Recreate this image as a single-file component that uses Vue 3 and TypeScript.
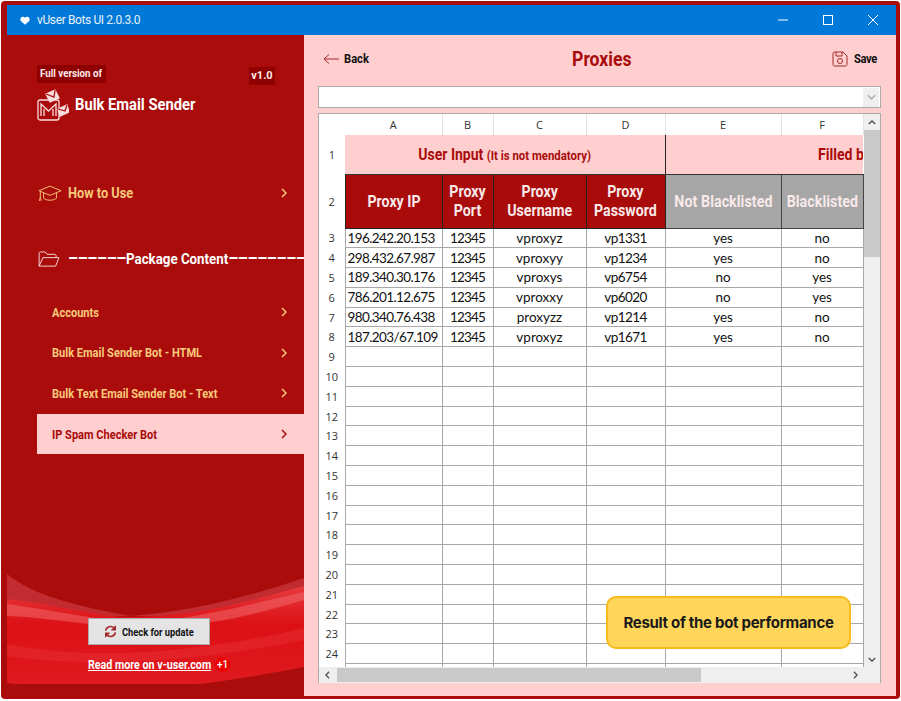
<script setup lang="ts">
interface Row { ip: string; port: string; user: string; pass: string; ok: string; bad: string }
const rows: Row[] = [
  { ip: '196.242.20.153', port: '12345', user: 'vproxyz', pass: 'vp1331', ok: 'yes', bad: 'no' },
  { ip: '298.432.67.987', port: '12345', user: 'vproxyy', pass: 'vp1234', ok: 'yes', bad: 'no' },
  { ip: '189.340.30.176', port: '12345', user: 'vproxys', pass: 'vp6754', ok: 'no', bad: 'yes' },
  { ip: '786.201.12.675', port: '12345', user: 'vproxxy', pass: 'vp6020', ok: 'no', bad: 'yes' },
  { ip: '980.340.76.438', port: '12345', user: 'proxyzz', pass: 'vp1214', ok: 'yes', bad: 'no' },
  { ip: '187.203/67.109', port: '12345', user: 'vproxyz', pass: 'vp1671', ok: 'yes', bad: 'no' },
]
const emptyRows: number[] = Array.from({ length: 16 }, (_, i) => i + 9)
const letters = ['A', 'B', 'C', 'D', 'E', 'F']
const packages = ['Accounts', 'Bulk Email Sender Bot - HTML', 'Bulk Text Email Sender Bot - Text']
</script>

<template>
  <div class="frame">
    <div class="window">
      <header class="titlebar">
        <svg class="app-icon" viewBox="0 0 12 10" width="10" height="9"><path d="M6 10 1 5.500C-.5 3.500 1 .5 3.500.5 4.700.5 5.500 1 6 2 6.500 1 7.300.5 8.500.5 11 .5 12.500 3.500 11 5.500Z" fill="#fff"/></svg>
        <span class="title-text">vUser Bots UI 2.0.3.0</span>
        <div class="win-controls">
          <svg viewBox="0 0 10 10" width="10" height="10"><path d="M0 5h10" stroke="#fff" fill="none"/></svg>
          <svg viewBox="0 0 10 10" width="10" height="10"><rect x=".5" y=".5" width="9" height="9" stroke="#fff" fill="none"/></svg>
          <svg viewBox="0 0 10 10" width="10" height="10"><path d="M0 0l10 10M10 0 0 10" stroke="#fff" fill="none"/></svg>
        </div>
      </header>

      <div class="body">
        <aside class="sidebar">
          <svg class="waves" viewBox="0 0 297 130" preserveAspectRatio="none" width="297" height="130">
            <defs>
              <linearGradient id="bright" x1="0" y1="0" x2="0" y2="1">
                <stop offset="0" stop-color="#e6393d"/>
                <stop offset=".4" stop-color="#dc1015"/>
                <stop offset="1" stop-color="#e01a20"/>
              </linearGradient>
            </defs>
            <path d="M0 8C25 28 60 38 123 50 190 45 250 28 297 12V50H0Z" fill="#c22c30"/>
            <path d="M0 33C50 38 90 51 123 51 200 50 250 32 297 20V118H0Z" fill="url(#bright)"/>
            <path d="M0 38C60 46 110 60 160 54 220 46 260 34 297 26V34C250 48 210 58 150 62 90 62 50 52 0 50Z" fill="#f0686a" opacity=".55"/>
            <path d="M0 78C70 92 170 92 297 62V74C170 100 70 100 0 90Z" fill="#ee4a4e" opacity=".25"/>
            <path d="M0 117C40 122 70 124 100 124 170 124 240 112 297 101V130H0Z" fill="#ab0d0d"/>
          </svg>

          <div class="brand">
            <div class="version-row">
              <span class="chip"><span class="sq-chip">Full version of</span></span>
              <span class="chip chip-version">v1.0</span>
            </div>
            <div class="brand-row">
              <svg class="logo" viewBox="0 0 32 32" width="32" height="32" fill="none" stroke="#f9dcdc" stroke-width="1.300">
                <rect x="1" y="11" width="21" height="20" rx="2"/>
                <path d="M4 27V15l7.500 7L19 15v12M7 27v-7M16 27v-7"/>
                <path d="M9 5l9-4 4 8-9 4Z" fill="#f9dcdc"/>
                <path d="M9 5l8 3 1-7" stroke="#a90b0b"/>
                <path d="M21 20l9-4 2 7-9 4Z" fill="#f9dcdc"/>
                <path d="M21 20l7 2 2-6" stroke="#a90b0b"/>
              </svg>
              <span class="brand-name">Bulk Email Sender</span>
            </div>
          </div>

          <div class="nav-main how">
            <svg class="nav-icon" viewBox="0 0 26 18" width="24" height="17" fill="none" stroke="#f7c97a" stroke-width="1"><path d="M1 6 13 1l12 5-12 5Z"/><path d="M6 8.500V14c3 3 11 3 14 0V8.500"/><path d="M2.500 7v6M1.500 17l1-4 1 4"/></svg>
            <span class="main-label">How to Use</span>
            <svg class="chev" viewBox="0 0 6 10" width="6" height="10" fill="none" stroke="currentColor" stroke-width="1.500"><path d="M1 1l4 4-4 4"/></svg>
          </div>

          <div class="nav-main package">
            <svg class="nav-icon" viewBox="0 0 24 18" width="23" height="17" fill="none" stroke="#f9dcdc" stroke-width="1"><path d="M1 16V2.500C1 1.700 1.700 1 2.500 1h5l2 2.500h8c.8 0 1.500.7 1.500 1.500v2"/><path d="M1 16 5 7h17l-3.500 9Z"/></svg>
            <span class="package-label"><span class="dash">––––––</span>Package Content<span class="dash">––––––––</span></span>
          </div>

          <nav class="sub-nav">
            <div v-for="p in packages" :key="p" class="sub-item">
              <span class="sub-label">{{ p }}</span>
              <svg class="chev" viewBox="0 0 6 10" width="6" height="10" fill="none" stroke="currentColor" stroke-width="1.500"><path d="M1 1l4 4-4 4"/></svg>
            </div>
            <div class="sub-item active">
              <span class="sub-label">IP Spam Checker Bot</span>
              <svg class="chev" viewBox="0 0 6 10" width="6" height="10" fill="none" stroke="currentColor" stroke-width="1.500"><path d="M1 1l4 4-4 4"/></svg>
            </div>
          </nav>

          <div class="foot">
            <button class="update">
              <svg viewBox="0 0 16 16" width="13" height="13" fill="none" stroke="#a5282a" stroke-width="2"><path d="M2 7a6 6 0 0 1 10.500-3L14 5.500"/><path d="M14 1v5H9" stroke-width="1.500" fill="#a5282a"/><path d="M14 9A6 6 0 0 1 3.500 12L2 10.500"/><path d="M2 15v-5h5" stroke-width="1.500" fill="#a5282a"/></svg>
              <span class="update-label">Check for update</span>
            </button>
            <div class="more">
              <a class="more-link">Read more on v-user.com</a>
              <span class="badge">+1</span>
            </div>
          </div>
        </aside>

        <main class="content">
          <div class="topbar">
            <div class="top-action">
              <svg viewBox="0 0 16 10" width="16" height="10" fill="none" stroke="#a5282a" stroke-width="1"><path d="M16 5H1M6 .5 1 5l5 4.500"/></svg>
              <span class="action-label">Back</span>
            </div>
            <h1 class="page-title">Proxies</h1>
            <div class="top-action save">
              <svg viewBox="0 0 16 16" width="16" height="16" fill="none" stroke="#a5282a" stroke-width="1"><path d="M1 2.500C1 1.700 1.700 1 2.500 1H11l4 4v8.500c0 .8-.7 1.500-1.500 1.500h-11C1.700 15 1 14.300 1 13.500Z"/><path d="M4 1v4h6V1"/><circle cx="8" cy="10" r="2.500"/></svg>
              <span class="action-label">Save</span>
            </div>
          </div>

          <div class="combo">
            <span class="combo-btn">
              <svg viewBox="0 0 10 6" width="9" height="6" fill="none" stroke="#a8a8a8" stroke-width="1.500"><path d="M1 1l4 4 4-4"/></svg>
            </span>
          </div>

          <div class="sheet">
            <div class="sheet-top">
              <div class="grid-clip">
                <table class="grid">
                  <colgroup>
                    <col class="c0"/><col class="c1"/><col class="c2"/><col class="c3"/><col class="c4"/><col class="c5"/><col class="c6"/>
                  </colgroup>
                  <tbody>
                    <tr class="r-letters">
                      <th class="rn plain"></th>
                      <th v-for="l in letters" :key="l" class="letter">{{ l }}</th>
                    </tr>
                    <tr class="r-group">
                      <th class="rn">1</th>
                      <th colspan="4" class="group"><span class="group-text">User Input <small>(It is not mendatory)</small></span></th>
                      <th colspan="2" class="group filled"><span class="filled-text">Filled by the bot</span></th>
                    </tr>
                    <tr class="r-head">
                      <th class="rn">2</th>
                      <th class="head"><span class="head-text">Proxy IP</span></th>
                      <th class="head"><span class="head-text">Proxy<br/>Port</span></th>
                      <th class="head"><span class="head-text">Proxy<br/>Username</span></th>
                      <th class="head"><span class="head-text">Proxy<br/>Password</span></th>
                      <th class="head grey"><span class="head-text">Not Blacklisted</span></th>
                      <th class="head grey"><span class="head-text">Blacklisted</span></th>
                    </tr>
                    <tr v-for="(r, i) in rows" :key="r.ip" class="r-data">
                      <th class="rn">{{ i + 3 }}</th>
                      <td class="ip">{{ r.ip }}</td>
                      <td class="port">{{ r.port }}</td>
                      <td>{{ r.user }}</td>
                      <td class="pass">{{ r.pass }}</td>
                      <td>{{ r.ok }}</td>
                      <td>{{ r.bad }}</td>
                    </tr>
                    <tr v-for="n in emptyRows" :key="n" class="r-data">
                      <th class="rn">{{ n }}</th>
                      <td></td><td></td><td></td><td></td><td></td><td></td>
                    </tr>
                    <tr class="r-data">
                      <th class="rn"></th>
                      <td></td><td></td><td></td><td></td><td></td><td></td>
                    </tr>
                  </tbody>
                </table>
                <div class="tooltip">Result of the bot performance</div>
              </div>
              <div class="vscroll">
                <svg viewBox="0 0 10 6" width="8" height="5" fill="none" stroke="#555" stroke-width="1.800"><path d="M1 5l4-4 4 4"/></svg>
                <div class="vthumb"></div>
                <div class="vtrack"></div>
                <svg viewBox="0 0 10 6" width="8" height="5" fill="none" stroke="#555" stroke-width="1.800"><path d="M1 1l4 4 4-4"/></svg>
              </div>
            </div>
            <div class="hscroll">
              <svg viewBox="0 0 6 10" width="5" height="8" fill="none" stroke="#555" stroke-width="1.800"><path d="M5 1 1 5l4 4"/></svg>
              <div class="hthumb"></div>
              <div class="htrack"></div>
              <svg viewBox="0 0 6 10" width="5" height="8" fill="none" stroke="#555" stroke-width="1.800"><path d="M1 1l4 4-4 4"/></svg>
            </div>
          </div>
        </main>
      </div>
    </div>
  </div>
</template>

<style>
html, body { margin: 0; background: #fff; }
</style>

<style scoped>
.frame {
  width: 901px; height: 701px; box-sizing: border-box; padding: 1px 1px 2px 1px;
  font-family: "Roboto", "Liberation Sans", sans-serif;
}
.window {
  width: 100%; height: 100%; box-sizing: border-box; display: flex; flex-direction: column;
  border: solid #aa0c0c; border-width: 4px 4px 3px 6px; border-radius: 4px; overflow: hidden; background: #ffcfcf;
}
.titlebar {
  height: 30px; flex: none; background: #0078d7; display: flex; align-items: center; padding-left: 13px; color: #fff;
}
.title-text { font: 12px "Roboto", sans-serif; margin-left: 7px; color: #e8f2fb; letter-spacing: -.38px; }
.win-controls { margin-left: auto; display: flex; align-items: center; gap: 35px; padding-right: 18px; }
.body { flex: 1; min-height: 0; display: flex; }

.sidebar { width: 297px; flex: none; background: #aa0c0c; position: relative; display: flex; flex-direction: column; overflow: hidden; }
.waves { position: absolute; left: 0; bottom: 0; }
.brand { padding: 30px 29px 0 30px; position: relative; }
.version-row { display: flex; justify-content: space-between; align-items: flex-start; }
.chip { background: #8f0000; color: #fdeaea; font-size: 11px; font-weight: 700; height: 18px; line-height: 18px; box-sizing: border-box; width: 69px; padding-left: 3px; overflow: hidden; white-space: nowrap; }
.sq-chip { display: inline-block; transform: scaleX(.885); transform-origin: left center; }
.chip-version { width: 26px; padding: 0; text-align: center; margin-top: 2px; }
.brand-row { display: flex; align-items: center; margin-top: 3px; gap: 6px; }
.logo { margin-top: 1px; flex: none; }
.brand-name { color: #fff; font-size: 16px; font-weight: 700; display: inline-block; transform: scaleX(.92); transform-origin: left center; white-space: nowrap; }

.nav-icon { flex: none; }
.nav-main { display: flex; align-items: center; position: relative; }
.how { margin: 63px 17px 0 31px; color: #f7c97a; }
.main-label { color: #f7c97a; font-size: 15px; font-weight: 700; margin-left: 6px; display: inline-block; transform: scaleX(.85); transform-origin: left center; white-space: nowrap; }
.chev { margin-left: auto; flex: none; }
.package { margin: 48px 0 0 31px; white-space: nowrap; }
.package-label { color: #fff; font-size: 15px; font-weight: 700; margin-left: 7px; margin-right: -60px; flex: none; display: inline-block; transform: scaleX(.887); transform-origin: left center; }
.dash { font-size: 18px; line-height: 15px; letter-spacing: -.45px; }

.sub-nav { margin: 24px 0 0 30px; position: relative; }
.sub-item {
  height: 40.500px; display: flex; align-items: center; padding: 0 17px 0 15px; color: #f7c97a;
}
.sub-label { font-size: 13px; font-weight: 700; display: inline-block; transform: scaleX(.85); transform-origin: left center; white-space: nowrap; }
.sub-item.active { background: #ffcfcf; color: #a90b0b; height: 40px; padding-top: 1px; box-sizing: border-box; }

.foot { margin-top: auto; padding-bottom: 24px; display: flex; flex-direction: column; align-items: center; position: relative; }
.update {
  width: 122px; height: 27px; background: #e4e4e4; border: 1px solid #aaa; display: flex; align-items: center;
  gap: 5px; color: #111; padding: 0 0 0 15px; margin-right: 13px; box-sizing: border-box;
}
.update-label { font: 700 11.500px "Roboto", sans-serif; display: inline-block; transform: scaleX(.81); transform-origin: left center; white-space: nowrap; }
.update svg { flex: none; }
.more { display: flex; align-items: center; margin-top: 12px; align-self: flex-start; margin-left: 81px; }
.more-link { color: #fff; font-size: 12.500px; font-weight: 700; text-decoration: underline; display: inline-block; transform: scaleX(.855); transform-origin: left center; white-space: nowrap; margin-right: -21px; }
.badge { color: #fff; font-size: 10px; font-weight: 500; background: #ee0000; width: 15px; height: 15px; border-radius: 50%; display: flex; align-items: center; justify-content: center; margin-left: 4px; }

.content { flex: 1; min-width: 0; padding: 0 15px 13px 14px; display: flex; flex-direction: column; }
.topbar { height: 47px; margin-bottom: 4px; flex: none; display: flex; align-items: center; justify-content: space-between; padding: 0 0 0 5px; box-sizing: border-box; }
.page-title { margin: 0 3px 0 0; color: #a90b0b; font-size: 20px; font-weight: 700; transform: scaleX(.88); }
.top-action { display: flex; align-items: center; gap: 5px; color: #111; width: 52px; }
.top-action.save { gap: 6px; margin-right: -3px; letter-spacing: -.4px; }
.top-action svg { flex: none; }
.action-label { font-size: 13px; font-weight: 700; display: inline-block; transform: scaleX(.86); transform-origin: left center; }
.combo {
  height: 22px; flex: none; box-sizing: border-box; background: #fff; border: 1px solid #aaa; display: flex; justify-content: flex-end; align-items: center; padding-right: 1px;
}
.combo-btn { width: 16px; height: 19px; background: #efefef; display: flex; align-items: center; justify-content: center; }

.sheet { flex: 1; min-height: 0; margin-top: 5px; border: 1px solid #aaa; border-bottom: 0; background: #fff; display: flex; flex-direction: column; }
.sheet-top { flex: 1; min-height: 0; display: flex; }
.grid-clip { flex: 1; min-width: 0; overflow: hidden; position: relative; }
.grid { border-collapse: collapse; table-layout: fixed; width: 544px; font-family: "Lato", sans-serif; }
.c0 { width: 26px; } .c1 { width: 97px; } .c2 { width: 51px; } .c3 { width: 93px; } .c4 { width: 79px; } .c5 { width: 116px; } .c6 { width: 82px; }
.grid th, .grid td { padding: 0; white-space: nowrap; overflow: hidden; box-sizing: border-box; }
.r-letters { height: 21px; }
.r-group { height: 39px; }
.r-head { height: 54px; }
.r-data { height: 19.800px; }
.rn { font-weight: 400; font-size: 11px; color: #333; text-align: center; font-family: "Open Sans", sans-serif; background: #fff; }
.letter { font: 400 11px "Open Sans", sans-serif; color: #333; border-right: 1px solid #e2e2e2; text-align: center; }
.group { background: #ffcfcf; color: #a90b0b; font: 700 16px "Roboto", sans-serif; text-align: center; border-right: 1px solid #222; border-bottom: 1px solid #333; }
.group-text { display: inline-block; transform: scaleX(.875); }
.group small { font-size: 13px; }
.filled { text-align: left; border-right: 0; }
.filled-text { margin-left: 152px; display: inline-block; transform: scaleX(.88); transform-origin: left center; }
.head { background: #a90b0b; color: #f9e9e9; font: 700 16px/19px "Roboto", sans-serif; text-align: center; border: 1px solid #222; border-top: 0; }
.head-text { display: inline-block; transform: scaleX(.885); }
.head.grey { background: #a6a6a6; border-color: #444; letter-spacing: .1px; }
.grid td { border: 1px solid #a8a8a8; border-top: 0; font-size: 13.500px; color: #111; text-align: center; line-height: 18px; }
.grid td.ip { text-align: left; padding-left: 2px; letter-spacing: -.6px; }
.grid td.port { letter-spacing: -.8px; }
.grid td.pass { letter-spacing: -.6px; }

.tooltip {
  position: absolute; left: 287px; top: 482px; width: 245px; height: 53px; box-sizing: border-box; background: #ffd65a; border: 2px solid #f6bb1c; border-radius: 10px;
  display: flex; align-items: center; justify-content: center; font: 700 15px "Inter", sans-serif; color: #1a1a1a; letter-spacing: -.3px;
}
.vscroll { width: 16px; flex: none; background: #efefef; display: flex; flex-direction: column; align-items: center; padding-top: 6px; padding-bottom: 5px; box-sizing: border-box; }
.vthumb { width: 16px; height: 127px; background: #c9c9c9; margin-top: 5px; flex: none; }
.vtrack { flex: 1; }
.hscroll { height: 16px; flex: none; background: #efefef; display: flex; align-items: center; padding: 0 22px 0 6px; }
.hthumb { width: 364px; height: 14px; background: #c9c9c9; margin-left: 7px; }
.htrack { flex: 1; }
</style>
